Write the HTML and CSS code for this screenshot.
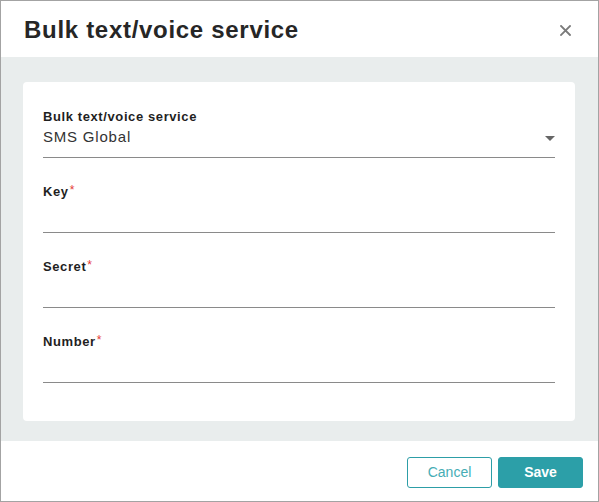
FILE: index.html
```html
<!DOCTYPE html>
<html>
<head>
<meta charset="utf-8">
<link rel="stylesheet" href="styles.css">
</head>
<body>
<div class="dialog">
  <header class="header">
    <h1 class="title">Bulk text/voice service</h1>
    <button class="close" aria-label="Close">
      <svg width="11" height="11" viewBox="0 0 11 11"><path d="M1 1L10 10M10 1L1 10" stroke="#7a7a7a" stroke-width="1.8" stroke-linecap="square"/></svg>
    </button>
  </header>
  <main class="body">
    <div class="card">
      <div class="field">
        <label class="label">Bulk text/voice service</label>
        <div class="input select">
          <span class="value">SMS Global</span>
          <svg class="caret" width="10" height="5" viewBox="0 0 10 5"><path d="M0 0H10L5 5Z" fill="#666"/></svg>
        </div>
      </div>
      <div class="field">
        <label class="label">Key<span class="req">*</span></label>
        <div class="input"></div>
      </div>
      <div class="field">
        <label class="label">Secret<span class="req">*</span></label>
        <div class="input"></div>
      </div>
      <div class="field">
        <label class="label">Number<span class="req">*</span></label>
        <div class="input"></div>
      </div>
    </div>
  </main>
  <footer class="footer">
    <button class="btn btn-outline">Cancel</button>
    <button class="btn btn-primary">Save</button>
  </footer>
</div>
</body>
</html>
```

FILE: styles.css
```css
* { box-sizing: border-box; }
html, body { margin: 0; padding: 0; }
body {
  font-family: "Liberation Sans", Arial, sans-serif;
  background: #fff;
  color: #222;
}
.dialog {
  width: 599px;
  height: 502px;
  border: 1px solid #a3a3a3;
  display: flex;
  flex-direction: column;
}
.header {
  height: 56px;
  display: flex;
  align-items: center;
  justify-content: space-between;
  padding: 0 27px 0 23px;
  background: #fff;
}
.title {
  margin: 0;
  font-size: 24px;
  font-weight: bold;
  letter-spacing: 0.7px;
  color: #262626;
  padding-top: 1px;
}
.close {
  border: 0;
  background: none;
  padding: 0;
  margin-top: 3px;
  display: flex;
  cursor: pointer;
}
.body {
  background: #e9eded;
  height: 384px;
  padding: 25px 23px 20px 22px;
}
.card {
  background: #fff;
  border-radius: 4px;
  padding: 27px 20px 38px 20px;
  display: flex;
  flex-direction: column;
  gap: 26px;
}
.field {
  display: flex;
  flex-direction: column;
}
.label {
  font-size: 13px;
  line-height: 16px;
  height: 16px;
  font-weight: bold;
  letter-spacing: 0.6px;
  color: #1f1f1f;
}
.req {
  color: #e53935;
  font-weight: normal;
  font-size: 12px;
  line-height: 12px;
  vertical-align: top;
  margin-left: 1px;
}
.input {
  height: 33px;
  border-bottom: 1px solid #8a8a8a;
}
.select {
  display: flex;
  align-items: flex-start;
  justify-content: space-between;
  padding-top: 3px;
}
.value {
  font-size: 15px;
  line-height: 18px;
  letter-spacing: 0.8px;
  color: #333;
}
.caret {
  margin-top: 8px;
}
.footer {
  flex: 1;
  display: flex;
  justify-content: flex-end;
  align-items: center;
  gap: 6px;
  padding: 2px 15px 0 0;
  background: #fff;
}
.btn {
  height: 31px;
  border-radius: 3px;
  font-family: "Liberation Sans", Arial, sans-serif;
  font-size: 14px;
  cursor: pointer;
}
.btn-outline {
  width: 85px;
  background: #fff;
  border: 1px solid #2d9ea7;
  color: #46adb5;
}
.btn-primary {
  width: 85px;
  background: #2c9fa8;
  border: 1px solid #2c9fa8;
  color: #fff;
  font-weight: bold;
}
```
